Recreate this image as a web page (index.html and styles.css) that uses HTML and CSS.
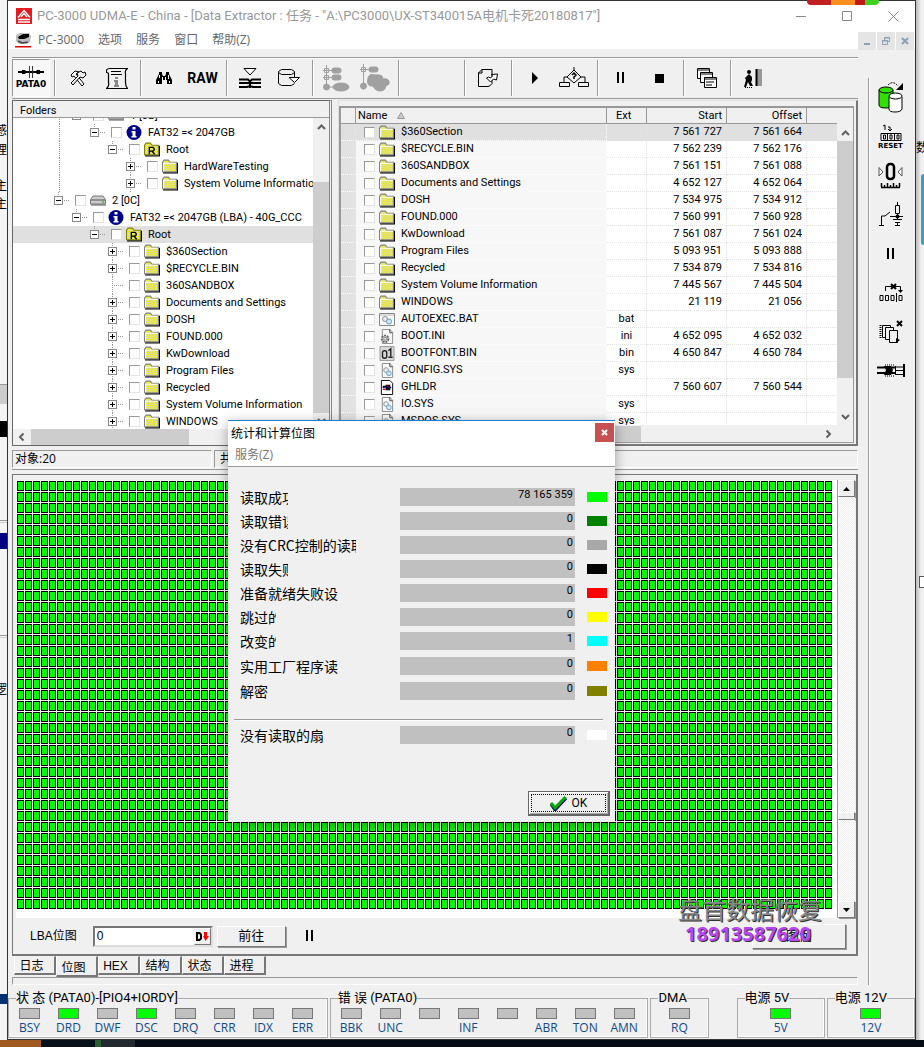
FILE: index.html
```html
<!DOCTYPE html>
<html lang="zh-CN">
<head>
<meta charset="utf-8">
<title>PC-3000 UDMA-E</title>
<link rel="stylesheet" href="styles.css">
</head>
<body>
<svg class="defs" aria-hidden="true">
  <defs>
    <pattern id="dither" width="2" height="2" patternUnits="userSpaceOnUse"><rect width="2" height="2" fill="#ff0"/><path d="M0 0h1v1H0zM1 1h1v1H1z" fill="#c8c8c8"/></pattern>
    <symbol id="folder" viewBox="0 0 15 13"><path d="M1 12.500h14M14.500 3v10" stroke="#000" stroke-width="1"/><path d="M.5 11.500V2.500L2 .5h4l1.500 2h6v9z" fill="url(#dither)" stroke="#808080"/><path d="M1.500 11V3.500h11.500" fill="none" stroke="#fff"/></symbol>
    <symbol id="rfolder" viewBox="0 0 15 13"><path d="M1 12.500h14M14.500 3v10" stroke="#000"/><path d="M.5 11.500V2.500L2 .5h4l1.500 2h6v9z" fill="url(#dither)" stroke="#808000"/><path d="M5 11V4.500h3.500L9.500 5.500v1.500l-1 1H5M7.500 8l2.500 3" fill="none" stroke="#000" stroke-width="1.300"/></symbol>
    <symbol id="info" viewBox="0 0 15 15"><circle cx="7.500" cy="7.500" r="7.500" fill="#00008b"/><path d="M6 2h3v2.500H6zM5 6h4v5h1v1.500H5V11h1V7.500H5z" fill="#fff"/></symbol>
    <symbol id="drive" viewBox="0 0 16 10"><path d="M3 .5h10L15.500 4v4.500H.5V4z" fill="#ccc" stroke="#777"/><path d="M1 9.500h15M1 4.500h14" stroke="#555"/><path d="M12 6h2v1h-2z" fill="#0a0"/></symbol>
    <symbol id="cog" viewBox="0 0 15 16"><path d="M2.500 .5h8l3 3v12h-11z" fill="#f8f8f8" stroke="#888"/><path d="M10.500 0v4h3" fill="none" stroke="#444"/><circle cx="6.500" cy="7.500" r="2.500" fill="#eee" stroke="#8494a0"/><circle cx="9.500" cy="11" r="2.500" fill="#cfe6f5" stroke="#6c9cc0"/></symbol>
    <symbol id="bat" viewBox="0 0 16 13"><path d="M.5 .5h15v12H.5z" fill="#f8f8f8" stroke="#888"/><path d="M1 2h14" stroke="#bbb"/><circle cx="6" cy="6" r="2.500" fill="#eee" stroke="#8494a0"/><circle cx="10" cy="8.500" r="2.500" fill="#cfe6f5" stroke="#6c9cc0"/></symbol>
    <symbol id="ini" viewBox="0 0 15 16"><path d="M2.500 .5h8l3 3v12h-11z" fill="#f8f8f8" stroke="#888"/><path d="M10.500 0v4h3" fill="none" stroke="#444"/><circle cx="5.500" cy="10.500" r="3.500" fill="#ddd" stroke="#666" stroke-width="2" stroke-dasharray="2 1"/><circle cx="5.500" cy="10.500" r="1.500" fill="#fff" stroke="#777"/></symbol>
    <symbol id="bin" viewBox="0 0 16 16"><path d="M.5 .5h15v15H.5z" fill="#d8d8d8" stroke="#999"/><rect x="3.200" y="5" width="4.500" height="8" rx="2" fill="none" stroke="#222" stroke-width="1.500"/><path d="M9.500 5L12 3v8M9.500 12h4.500" fill="none" stroke="#222" stroke-width="1.500"/></symbol>
    <symbol id="exe" viewBox="0 0 15 16"><path d="M1.500 .5h9l3 3v12h-12z" fill="#fff" stroke="#000"/><path d="M3 6h3v2H3zM6 5h5v6H6z" fill="#000"/><path d="M3 10h3M7 6.500h2" stroke="#e00" stroke-width="1.500"/><path d="M9 8h3M3 8h2" stroke="#00c" stroke-width="1.500"/></symbol>
    <symbol id="up" viewBox="0 0 9 6"><path d="M1 5l3.500-3.500L8 5" fill="none" stroke="#606060" stroke-width="2"/></symbol>
    <symbol id="pause" viewBox="0 0 8 12"><path d="M0 0h2v11H0zM5 0h2v11H5z"/></symbol>
  </defs>
</svg>
<div class="desktop">
  <aside class="edge edge-left" aria-hidden="true"><i class="frag t1">感</i><i class="frag t2">理</i><i class="frag t3">主</i><i class="frag t4">主</i><i class="blk k1"></i><i class="blk k2"></i><i class="blk k3"></i><i class="rule r1"></i><i class="rule r2"></i><i class="rule r3"></i><i class="frag t5">逻</i></aside>
  <main class="window">
    <header class="title">
      <svg width="16" height="16" viewBox="0 0 16 16"><path d="M0 0h16v16H0z" fill="#e21b22"/><path d="M2 9.500l6-7 6 7M5 9l3-3.500L11 9M2 11.500h12M2 14h12" fill="none" stroke="#fff" stroke-width="1.400"/></svg>
      <h1>PC-3000 UDMA-E - China - [Data Extractor : 任务 - "A:\PC3000\UX-ST340015A电机卡死20180817"]</h1>
      <div class="winbtns">
        <button aria-label="最小化"><svg width="11" height="11"><path d="M0 5.500h10" stroke="#888"/></svg></button>
        <button aria-label="最大化"><svg width="11" height="11"><path d="M.5 .5h9v9h-9z" fill="none" stroke="#888"/></svg></button>
        <button aria-label="关闭"><svg width="11" height="11"><path d="M.5 .5l10 10M10.500 .5l-10 10" stroke="#888"/></svg></button>
      </div>
    </header>
    <nav class="menu">
      <svg width="16" height="16" viewBox="0 0 16 16"><path d="M1 3l4-2h9l2 3-1 6-3 2H4l-3-3z" fill="#bbb"/><path d="M3 5l5-3h6v3l-5 2H4z"/><path d="M3 9l4 2 6-1" stroke="#444" fill="none" stroke-width="1.500"/><path d="M0 14h16v1.500H0z" fill="#d00"/></svg>
      <button>PC-3000</button><button>选项</button><button>服务</button><button>窗口</button><button>帮助(Z)</button>
      <div class="mdi">
        <button aria-label="最小化子窗口"><svg width="10" height="10"><path d="M2 7h6v2H2z" fill="#8aa0b4"/></svg></button>
        <button aria-label="还原子窗口"><svg width="10" height="10"><path d="M3.500 4V1.500h5v4H7M3 2h6" fill="none" stroke="#8aa0b4"/><path d="M1.500 4.500h5v4h-5zM1 5h6" fill="none" stroke="#8aa0b4"/></svg></button>
        <button aria-label="关闭子窗口"><svg width="10" height="10"><path d="M2 2l6 6M8 2L2 8" stroke="#8aa0b4" stroke-width="2"/></svg></button>
      </div>
    </nav>
    <div class="body">
      <div class="main">
        <div class="toolbar" role="toolbar">
          <button class="tb pata"><svg width="26" height="12" viewBox="0 0 26 12"><path d="M0 6h26" stroke="#000" stroke-width="2"/><path d="M4 4h3l2 2-2 2H4zM22 4h-3l-2 2 2 2h3z"/><path d="M11.500 0v12M14.500 0v12" stroke="#333"/></svg><span>PATA0</span></button><i class="sep"></i>
          <button class="tb" aria-label="工具"><svg width="18" height="18" viewBox="0 0 18 18"><path d="M2 6l4-4 4 1-3 2 8 10-2 2L5 7 3 8z" fill="#fff" stroke="#000"/><path d="M12 2l2 2 2-1 1 3-3 3-3-1-7 8-2-2 7-7-1-3z" fill="#f0f0f0" stroke="#000"/></svg></button>
          <button class="tb" aria-label="信息"><svg width="22" height="23" viewBox="0 0 22 23"><path d="M3.500 1.500h18q-3 2-2 5v9q0 4 2 6H.5q3-2 2-6v-8q0-2-2-2V3q1-1.500 3-1.500z" fill="none" stroke="#000" stroke-width="1.200"/><path d="M5 4.500h10M5 7.500h11" stroke="#000"/><path d="M9 10h3v2H9zM8 13h4v5h1v2H8v-2h1v-3H8z" fill="#888"/></svg></button><i class="sep"></i>
          <button class="tb" aria-label="查找"><svg width="16" height="14" viewBox="0 0 16 14"><path d="M3 1h3v2l1 2h2l1-2V1h3v2l3 6v4h-5V9H6v4H0V9l3-6z"/><path d="M3.500 4v3M6.500 6v3M9.500 6v3M12.500 4v4M2.500 10v2M13.500 10v2" stroke="#fff"/></svg></button>
          <button class="tb raw">RAW</button><i class="sep"></i>
          <button class="tb" aria-label="收集"><svg width="22" height="21" viewBox="0 0 22 21"><path d="M5 .5h12L11 7z" fill="#fff" stroke="#000"/><path d="M0 11.500h9l2 2 2-2h9M0 15h22M0 19h8l3-1 3 1h8M11 12v8" fill="none" stroke="#000" stroke-width="2"/></svg></button>
          <button class="tb" aria-label="磁盘"><svg width="24" height="20" viewBox="0 0 24 20"><path d="M1.500 4.500v11l3 2h10l3-2M17.500 4v5M1.500 3.500l3-2h10l3 2v1l-3 2h-10l-3-2z" fill="none" stroke="#000"/><path d="M12 9.500h10.500l-5 5z" fill="#fff" stroke="#000"/></svg></button><i class="sep"></i>
          <button class="tb" aria-label="树" disabled><svg width="28" height="27" viewBox="0 0 28 27" fill="#a0a0a0" stroke="#a0a0a0"><path d="M4.500 0v24M1 5.500h8M1 12.500h8M4 22h9" fill="none"/><path d="M2.500 3.500h4v4h-4zM2.500 10.500h4v4h-4z" fill="#eee"/><path d="M4.500 3v12M2 5.500h8M2 12.500h8" fill="none"/><rect x="10" y="3" width="9" height="5" rx="2"/><rect x="10" y="10" width="9" height="5" rx="2"/><circle cx="4.500" cy="22" r="3"/><ellipse cx="19" cy="22" rx="8" ry="4"/></svg></button>
          <button class="tb" aria-label="地图" disabled><svg width="31" height="29" viewBox="0 0 31 29" fill="#a0a0a0" stroke="#a0a0a0"><path d="M4.500 0v26M1 5.500h10" fill="none"/><path d="M2.500 3.500h4v4h-4z" fill="#eee"/><path d="M4.500 3v6M2 5.500h8" fill="none"/><rect x="10" y="3" width="9" height="5" rx="2"/><circle cx="4.500" cy="22" r="3"/><path d="M9 14q1-5 7-3 8-1 8 4 7-1 6 5-2 2-3 1 0 5-5 6-6 0-8-5-7 1-5-8z"/></svg></button><i class="sep"></i>
          <i class="space"></i><i class="sep"></i>
          <button class="tb" aria-label="导出"><svg width="20" height="20" viewBox="0 0 20 20"><path d="M4 1.500h10v14q-2 3-4 3H.5V5zM4 1v4H0" fill="none" stroke="#000"/><path d="M19.500 6l-1 6-3-1-3 3-4-4 2-1 2 1 2-2-1-1.500z" fill="#fff" stroke="#000"/></svg></button><i class="sep"></i>
          <button class="tb" aria-label="开始"><svg width="8" height="12"><path d="M1 0l6 6-6 6z"/></svg></button>
          <button class="tb" aria-label="流程"><svg width="30" height="22" viewBox="0 0 30 22"><path d="M15 0v4M15 3l7 7-7 6-7-6zM8 10H5v5M22 10h4v5M.5 15.500h10v4H.5zM19.500 15.500h10v4h-10z" fill="none" stroke="#000"/><path d="M13 8l2-2 2 2-2 2v2" fill="none" stroke="#000" stroke-width="1.500"/></svg></button><i class="sep"></i>
          <button class="tb" aria-label="暂停"><svg width="8" height="12"><use href="#pause"/></svg></button>
          <button class="tb" aria-label="停止"><svg width="9" height="9"><path d="M0 0h9v9H0z"/></svg></button><i class="sep"></i>
          <button class="tb" aria-label="窗口"><svg width="20" height="20" viewBox="0 0 20 20"><g fill="#fff" stroke="#000"><path d="M.5 .5h12v10H.5zM1 2h11"/><path d="M3.500 4.500h12v10h-12zM4 6h11"/><path d="M7.500 9.500h12v10h-12zM8 11h11M9 14h8M9 17h6"/></g></svg></button><i class="sep"></i>
          <button class="tb" aria-label="退出"><svg width="20" height="19" viewBox="0 0 20 19"><circle cx="5" cy="3" r="2"/><path d="M5 5l3 3v3l-1 2 2 4H6l-2-4-2 5H0l2-7-1-2z"/><path d="M12 0h6v17h-6z" fill="#999"/><path d="M12.500 0v17" stroke="#000" stroke-width="2"/><path d="M1 18.500h8" stroke="#000" stroke-dasharray="1 1"/></svg></button>
        </div>
        <div class="panels">
          <section class="folders">
            <h2>Folders</h2>
            <div class="tree" role="tree">
              <div class="row d1 line0"><i class="exp m"></i><input type="checkbox" aria-label="1"><svg class="ic"><use href="#drive"/></svg><span>1 [0B]</span></div>
              <div class="row d2 line0"><i class="exp m"></i><input type="checkbox" aria-label="2"><svg class="ic"><use href="#info"/></svg><span>FAT32 =&lt; 2047GB</span></div>
              <div class="row d3 line0"><i class="exp m"></i><input type="checkbox" aria-label="3"><svg class="ic"><use href="#rfolder"/></svg><span>Root</span></div>
              <div class="row d4 line0"><i class="exp"></i><input type="checkbox" aria-label="4"><svg class="ic"><use href="#folder"/></svg><span>HardWareTesting</span></div>
              <div class="row d4 line0"><i class="exp"></i><input type="checkbox" aria-label="5"><svg class="ic"><use href="#folder"/></svg><span>System Volume Information</span></div>
              <div class="row d0"><i class="exp m"></i><input type="checkbox" aria-label="6"><svg class="ic"><use href="#drive"/></svg><span>2 [0C]</span></div>
              <div class="row d1"><i class="exp m"></i><input type="checkbox" aria-label="7"><svg class="ic"><use href="#info"/></svg><span>FAT32 =&lt; 2047GB (LBA) - 40G_CCC</span></div>
              <div class="row d2 sel"><i class="exp m"></i><input type="checkbox" aria-label="8"><svg class="ic"><use href="#rfolder"/></svg><span>Root</span></div>
              <div class="row d3"><i class="exp"></i><input type="checkbox" aria-label="9"><svg class="ic"><use href="#folder"/></svg><span>$360Section</span></div>
              <div class="row d3"><i class="exp"></i><input type="checkbox" aria-label="10"><svg class="ic"><use href="#folder"/></svg><span>$RECYCLE.BIN</span></div>
              <div class="row d3"><i class="exp none"></i><input type="checkbox" aria-label="11"><svg class="ic"><use href="#folder"/></svg><span>360SANDBOX</span></div>
              <div class="row d3"><i class="exp"></i><input type="checkbox" aria-label="12"><svg class="ic"><use href="#folder"/></svg><span>Documents and Settings</span></div>
              <div class="row d3"><i class="exp"></i><input type="checkbox" aria-label="13"><svg class="ic"><use href="#folder"/></svg><span>DOSH</span></div>
              <div class="row d3"><i class="exp"></i><input type="checkbox" aria-label="14"><svg class="ic"><use href="#folder"/></svg><span>FOUND.000</span></div>
              <div class="row d3"><i class="exp"></i><input type="checkbox" aria-label="15"><svg class="ic"><use href="#folder"/></svg><span>KwDownload</span></div>
              <div class="row d3"><i class="exp"></i><input type="checkbox" aria-label="16"><svg class="ic"><use href="#folder"/></svg><span>Program Files</span></div>
              <div class="row d3"><i class="exp"></i><input type="checkbox" aria-label="17"><svg class="ic"><use href="#folder"/></svg><span>Recycled</span></div>
              <div class="row d3"><i class="exp"></i><input type="checkbox" aria-label="18"><svg class="ic"><use href="#folder"/></svg><span>System Volume Information</span></div>
              <div class="row d3"><i class="exp"></i><input type="checkbox" aria-label="19"><svg class="ic"><use href="#folder"/></svg><span>WINDOWS</span></div>
            </div>
            <div class="vbar"><svg><use href="#up"/></svg><i class="gap-tree"></i><i class="thumb"></i><svg class="dn"><use href="#up"/></svg></div>
            <div class="hbar"><svg class="lt"><use href="#up"/></svg><i class="thumb tree-h"></i><svg class="rt"><use href="#up"/></svg></div>
          </section>
          <section class="files">
            <div class="fileview">
            <div class="tablebox">
            <table>
              <colgroup><col class="c0"><col class="c1"><col class="c2"><col class="c3"><col class="c3"><col></colgroup>
              <thead><tr><th></th><th class="n">Name <svg class="sort" width="8" height="7"><path d="M4 .5l3.500 6h-7z" fill="#ccc" stroke="#999"/></svg></th><th>Ext</th><th class="r">Start</th><th class="r">Offset</th><th></th></tr></thead>
              <tbody>
              <tr class="sel"><td></td><td><label><input type="checkbox"><svg class="ic"><use href="#folder"/></svg>$360Section</label></td><td></td><td>7 561 727</td><td>7 561 664</td><td></td></tr>
              <tr><td></td><td><label><input type="checkbox"><svg class="ic"><use href="#folder"/></svg>$RECYCLE.BIN</label></td><td></td><td>7 562 239</td><td>7 562 176</td><td></td></tr>
              <tr><td></td><td><label><input type="checkbox"><svg class="ic"><use href="#folder"/></svg>360SANDBOX</label></td><td></td><td>7 561 151</td><td>7 561 088</td><td></td></tr>
              <tr><td></td><td><label><input type="checkbox"><svg class="ic"><use href="#folder"/></svg>Documents and Settings</label></td><td></td><td>4 652 127</td><td>4 652 064</td><td></td></tr>
              <tr><td></td><td><label><input type="checkbox"><svg class="ic"><use href="#folder"/></svg>DOSH</label></td><td></td><td>7 534 975</td><td>7 534 912</td><td></td></tr>
              <tr><td></td><td><label><input type="checkbox"><svg class="ic"><use href="#folder"/></svg>FOUND.000</label></td><td></td><td>7 560 991</td><td>7 560 928</td><td></td></tr>
              <tr><td></td><td><label><input type="checkbox"><svg class="ic"><use href="#folder"/></svg>KwDownload</label></td><td></td><td>7 561 087</td><td>7 561 024</td><td></td></tr>
              <tr><td></td><td><label><input type="checkbox"><svg class="ic"><use href="#folder"/></svg>Program Files</label></td><td></td><td>5 093 951</td><td>5 093 888</td><td></td></tr>
              <tr><td></td><td><label><input type="checkbox"><svg class="ic"><use href="#folder"/></svg>Recycled</label></td><td></td><td>7 534 879</td><td>7 534 816</td><td></td></tr>
              <tr><td></td><td><label><input type="checkbox"><svg class="ic"><use href="#folder"/></svg>System Volume Information</label></td><td></td><td>7 445 567</td><td>7 445 504</td><td></td></tr>
              <tr><td></td><td><label><input type="checkbox"><svg class="ic"><use href="#folder"/></svg>WINDOWS</label></td><td></td><td>21 119</td><td>21 056</td><td></td></tr>
              <tr><td></td><td><label><input type="checkbox"><svg class="ic"><use href="#bat"/></svg>AUTOEXEC.BAT</label></td><td>bat</td><td></td><td></td><td></td></tr>
              <tr><td></td><td><label><input type="checkbox"><svg class="ic"><use href="#ini"/></svg>BOOT.INI</label></td><td>ini</td><td>4 652 095</td><td>4 652 032</td><td></td></tr>
              <tr><td></td><td><label><input type="checkbox"><svg class="ic"><use href="#bin"/></svg>BOOTFONT.BIN</label></td><td>bin</td><td>4 650 847</td><td>4 650 784</td><td></td></tr>
              <tr><td></td><td><label><input type="checkbox"><svg class="ic"><use href="#cog"/></svg>CONFIG.SYS</label></td><td>sys</td><td></td><td></td><td></td></tr>
              <tr><td></td><td><label><input type="checkbox"><svg class="ic"><use href="#exe"/></svg>GHLDR</label></td><td></td><td>7 560 607</td><td>7 560 544</td><td></td></tr>
              <tr><td></td><td><label><input type="checkbox"><svg class="ic"><use href="#cog"/></svg>IO.SYS</label></td><td>sys</td><td></td><td></td><td></td></tr>
              <tr><td></td><td><label><input type="checkbox"><svg class="ic"><use href="#cog"/></svg>MSDOS.SYS</label></td><td>sys</td><td></td><td></td><td></td></tr>
              </tbody>
            </table>
            </div>
            <div class="vbar"><svg><use href="#up"/></svg><i class="thumb file-v"></i><i class="fill"></i><svg class="dn"><use href="#up"/></svg></div>
            <div class="hbar"><svg class="lt"><use href="#up"/></svg><i class="thumb file-h"></i><svg class="rt"><use href="#up"/></svg></div>
            </div>
          </section>
        </div>
        <div class="counts"><span>对象:20</span><span>共</span></div>
        <section class="map">
          <div class="mapview"><div class="cells"></div></div>
          <div class="oldbar"><button aria-label="向上"><svg width="7" height="4"><path d="M0 4h7L3.500 0z"/></svg></button><i class="track"></i><i class="knob"></i><i class="track low"></i><button aria-label="向下"><svg width="7" height="4"><path d="M0 0h7L3.500 4z"/></svg></button></div>
          <form class="lba">
            <label for="lba">LBA位图</label>
            <div class="field"><input id="lba" type="text" value="0"><button type="button" aria-label="D"><svg width="13" height="9" viewBox="0 0 13 9"><path d="M1 1h2.500L5 2.500v4L3.500 8H1z" fill="none" stroke="#000" stroke-width="2"/><path d="M8 0h3v4h2L9.500 9 7 4h1z" fill="red"/></svg></button></div>
            <button type="button" class="raised go">前往</button>
            <svg width="8" height="12"><use href="#pause"/></svg>
            <button type="button" class="raised legend">图例</button>
          </form>
          <div class="mark" aria-hidden="true"><b>盘首数据恢复</b><strong>18913587620</strong></div>
        </section>
        <div class="tabs" role="tablist"><button>日志</button><button class="on">位图</button><button>HEX</button><button>结构</button><button>状态</button><button>进程</button></div>
        <div class="sunk"></div>
      </div>
      <div class="side" role="toolbar">
        <button aria-label="数据库"><svg width="26" height="31" viewBox="0 0 26 31"><path d="M1 8v15q0 3 7 3t7-3V8" fill="#2fe000" stroke="#000"/><ellipse cx="8" cy="8" rx="7" ry="3" fill="#2fe000" stroke="#000"/><path d="M11 15v12q0 3 6 3t7-3V15" fill="#fff" stroke="#000"/><ellipse cx="17.500" cy="14" rx="6.500" ry="3" fill="#fff" stroke="#000"/><path d="M10 3q5-5 10 1" fill="none" stroke="#000" stroke-dasharray="2 1"/><path d="M25 1v7h-7z"/></svg></button>
        <button aria-label="RESET"><svg width="22" height="17" viewBox="0 0 22 17"><path d="M3 2l2-1v5M8 3h2v4M8 5l2 2 2-2" fill="none" stroke="#000"/><path d="M1 9.500h20v7H1zM7.500 9v8M14.500 9v8M3.500 11h2v4h-2zM10 11h2v4h-2zM17 11h2v4h-2z" fill="none" stroke="#000"/></svg><span>RESET</span></button>
        <button aria-label="归零"><svg width="25" height="27" viewBox="0 0 25 27"><rect x="9" y="2" width="7" height="15" rx="3" fill="none" stroke="#000" stroke-width="2.500"/><path d="M1 5.500l4 4.500-4 4zM24 5.500L20 10l4 4z" fill="#fff" stroke="#555"/><path d="M3 25.500h19M3.500 21v4M6.500 23v2M9.500 21v4M12.500 23v2M15.500 21v4M18.500 23v2M21.500 21v4" stroke="#000" stroke-width="1.500"/></svg></button>
        <button aria-label="电源"><svg width="24" height="25" viewBox="0 0 24 25"><path d="M0 23.500h5M2.500 23v-9H6l5-4M11 14.500h13M18.500 0v3M16.500 3.500h4v8h-4zM18.500 12v6M14 17.500h9M16 20.500h5M16 23.500h5M18.500 20v4" fill="none" stroke="#000"/><circle cx="18.500" cy="14.500" r="2"/></svg></button>
        <button aria-label="暂停"><svg width="8" height="12"><use href="#pause"/></svg></button>
        <button aria-label="跳过"><svg width="24" height="19" viewBox="0 0 24 19"><path d="M6.500 8V3.500h15V8M1 12.500h3v5H1zM6.500 12.500h3v5h-3zM12 12.500h3v5h-3zM17.500 10v9M20 12.500h3v5h-3z" fill="none" stroke="#000"/><path d="M12 1l5 5M17 1l-5 5" stroke="#000" stroke-width="2"/><path d="M19 7h5l-2.500 3z"/></svg></button>
        <button aria-label="复制"><svg width="24" height="24" viewBox="0 0 24 24"><g fill="#f0f0f0" stroke="#000"><path d="M3.500 5.500h8v12h-8z"/><path d="M6.500 7.500h8v12h-8z"/><path d="M10.500 10.500h8v12h-8z"/></g><path d="M1.500 5v13" stroke="#000" stroke-width="2" stroke-dasharray="1 1"/><path d="M18 1l5 5M23 1l-5 5" stroke="#000" stroke-width="2"/><path d="M17 18l4 2-4 3z"/></svg></button>
        <button aria-label="连接"><svg width="28" height="13" viewBox="0 0 28 13"><path d="M0 3.500h19M0 9h19" stroke="#000" stroke-width="2"/><path d="M7 2h7l2 4-2 5H7l2-5z"/><path d="M8 1h9M8 12h9" stroke="#000" stroke-dasharray="1 1"/><path d="M18.500 3h8M18.500 10.500h8M18.500 2v9M18 6.500h8" fill="none" stroke="#000"/><path d="M27 0v13" stroke="#000" stroke-width="2"/></svg></button>
      </div>
    </div>
    <footer class="groups">
      <fieldset><legend>状 态 (PATA0)-[PIO4+IORDY]</legend><div class="leds"><span><i></i>BSY</span><span><i class="g"></i>DRD</span><span><i></i>DWF</span><span><i class="g"></i>DSC</span><span><i></i>DRQ</span><span><i></i>CRR</span><span><i></i>IDX</span><span><i></i>ERR</span></div></fieldset>
      <fieldset><legend>错 误 (PATA0)</legend><div class="leds"><span><i></i>BBK</span><span><i></i>UNC</span><span><i></i></span><span><i></i>INF</span><span><i></i></span><span><i></i>ABR</span><span><i></i>TON</span><span><i></i>AMN</span></div></fieldset>
      <fieldset><legend>DMA</legend><div class="leds one"><span><i></i>RQ</span></div></fieldset>
      <div></div>
      <fieldset><legend>电源 5V</legend><div class="leds one"><span><i class="g"></i>5V</span></div></fieldset>
      <fieldset><legend>电源 12V</legend><div class="leds one"><span><i class="g"></i>12V</span></div></fieldset>
    </footer>
    <div class="badge" aria-hidden="true"></div>
    <section class="dialog" role="dialog" aria-labelledby="dt">
      <header><h2 id="dt">统计和计算位图</h2><button aria-label="关闭"><svg width="7" height="7"><path d="M1 1l5 5M6 1L1 6" stroke="#fff" stroke-width="2"/></svg></button></header>
      <nav><button>服务(Z)</button></nav>
      <div class="stats">
        <div class="stat"><span class="w4">读取成功</span><output>78 165 359</output><i class="s1"></i></div>
        <div class="stat"><span class="w4">读取错误</span><output>0</output><i class="s2"></i></div>
        <div class="stat"><span class="w8">没有CRC控制的读取</span><output>0</output><i class="s3"></i></div>
        <div class="stat"><span class="w4">读取失败</span><output>0</output><i class="s4"></i></div>
        <div class="stat"><span>准备就绪失败设</span><output>0</output><i class="s5"></i></div>
        <div class="stat"><span class="w3">跳过的</span><output>0</output><i class="s6"></i></div>
        <div class="stat"><span class="w3">改变的</span><output>1</output><i class="s7"></i></div>
        <div class="stat"><span>实用工厂程序读</span><output>0</output><i class="s8"></i></div>
        <div class="stat"><span>解密</span><output>0</output><i class="s9"></i></div>
      </div>
      <hr>
      <div class="stats last"><div class="stat"><span>没有读取的扇</span><output>0</output><i class="s10"></i></div></div>
      <button class="ok"><span><svg width="17" height="15" viewBox="0 0 17 15"><path d="M1 8l4 6L16 2" fill="none" stroke="#00006a" stroke-width="3"/><path d="M1 7l4 5L15.500 1" fill="none" stroke="#0a0" stroke-width="3"/></svg>OK</span></button>
    </section>
  </main>
  <aside class="edge edge-right" aria-hidden="true"><i class="frag q1">数</i><i class="blk q2"></i><i class="blk q3"></i></aside>
  <div class="taskbar"></div>
</div>
</body>
</html>
```
FILE: styles.css
```css
* { box-sizing: border-box; }
body { margin: 0; font: 11px/17px Roboto, "Liberation Sans", "Noto Sans CJK SC", sans-serif; color: #000; background: #f4f4f4; }
button { font: inherit; color: inherit; background: none; border: 0; padding: 0; margin: 0; }
h1, h2 { margin: 0; font-weight: normal; }
i { font-style: normal; }
svg { display: block; flex: none; }
.defs { position: absolute; width: 0; height: 0; }
.desktop { display: grid; grid-template-columns: 7px 1fr 8px; grid-template-rows: auto 7px; }
.edge { position: relative; overflow: hidden; background: #f4f4f4; }
.edge-right { background: linear-gradient(90deg, #bbb, #f0f0f0 5px); }
.taskbar { grid-column: 1 / 4; background: linear-gradient(90deg, #a05a20 0 41px, #08101a 41px 95px, #2a6030 95px 101px, #222a30 101px 135px, #050c16 135px); }
.frag { position: absolute; right: 0; font-size: 12px; }
.t1 { top: 123px; } .t2 { top: 142px; } .t3 { top: 178px; } .t4 { top: 196px; } .t5 { top: 682px; }
.blk { position: absolute; left: 0; width: 7px; height: 16px; background: #000; }
.k1 { top: 421px; } .k2 { top: 533px; background: #000080; } .k3 { top: 994px; height: 10px; background: #003070; }
.rule { position: absolute; left: 0; right: 0; height: 3px; border-top: 1px solid #999; border-bottom: 1px solid #ccc; }
.r1 { top: 384px; height: 20px; background: #ccc; } .r2 { top: 520px; } .r3 { top: 635px; }
.frag.q1 { left: 0; top: 140px; } .q2 { left: 5px; top: 174px; height: 71px; background: #38a0c0; border-radius: 3px; }
.q3 { left: 3px; top: 576px; height: 12px; background: #fff; border: 1px solid #555; }

.window { position: relative; border: 1px solid #333; background: #f0f0f0; }
.title { display: flex; align-items: center; height: 30px; padding-left: 8px; background: #fff; color: #999; }
.title h1 { flex: 1; padding-left: 5px; font: 13px/18px Roboto, "Noto Sans CJK SC", sans-serif; white-space: nowrap; }
.winbtns { display: flex; gap: 35px; padding-right: 16px; }
.menu { display: flex; gap: 14px; align-items: center; height: 18px; padding-left: 7px; background: #fff; color: #666; font: 12px/18px "Open Sans", "Noto Sans CJK SC", sans-serif; }
.menu > svg { margin-right: -7px; }
.mdi { display: flex; gap: 1px; margin-left: auto; align-self: flex-start; padding: 1px 1px 0 0; }
.mdi button { display: grid; place-items: center; width: 18px; height: 18px; background: #e5e5e5; }

.body { display: grid; grid-template-columns: 1fr 47px; gap: 10px; padding-left: 4px; }
.main { min-width: 0; padding-top: 8px; }
.toolbar { display: flex; align-items: center; height: 42px; border-top: 1px solid #999; border-bottom: 1px solid #999; box-shadow: inset 0 1px #fff; }
.tb { display: grid; place-items: center; flex: 0 0 39px; height: 38px; }
.pata { flex-basis: 38px; align-content: center; gap: 1px; background: #f7f7f7; border: 1px solid #999; border-color: #999 #fff #fff #999; font: bold 9px/11px "DejaVu Sans", sans-serif; }
.raw { font: bold 14px/18px Roboto, sans-serif; }
.sep { flex: 0 0 8px; height: 36px; background: linear-gradient(90deg, transparent 4px, #999 4px 5px, #fff 5px 6px, transparent 6px); }
.space { flex: 0 0 58px; }

.panels { display: grid; grid-template-columns: 320px 1fr; gap: 6px; height: 346px; margin-top: 1px; }
.folders { display: grid; grid-template: 17px 1fr 16px / 1fr 16px; border: 1px solid #666; border-right: 3px double #888; background: #f0f0f0; min-height: 0; }
.folders h2 { grid-column: 1 / 3; padding-left: 7px; font-size: 11px; line-height: 19px; border-bottom: 1px solid #999; }
.tree { overflow: hidden; background: #fff; min-height: 0; min-width: 0; }
.row { display: flex; align-items: center; height: 17px; white-space: nowrap; }
.row:first-child { margin-top: -11px; }
.row.sel { background: #e0e0e0; }
.line0 { background: repeating-linear-gradient(#999 0 1px, transparent 1px 2px) 46px 0 / 1px 100% no-repeat; }
.d0 { padding-left: 41px; } .d1 { padding-left: 59px; } .d2 { padding-left: 77px; } .d3 { padding-left: 95px; } .d4 { padding-left: 113px; }
.exp { flex: none; width: 21px; height: 17px; background: linear-gradient(#000, #000) 2px 8px / 5px 1px no-repeat, linear-gradient(#000, #000) 4px 6px / 1px 5px no-repeat, linear-gradient(#fff, #fff) 1px 5px / 7px 7px no-repeat, linear-gradient(#888, #888) 0 4px / 9px 9px no-repeat, repeating-linear-gradient(90deg, #999 0 1px, transparent 1px 2px) 10px 8px / 6px 1px no-repeat, repeating-linear-gradient(#999 0 1px, transparent 1px 2px) 4px 0 / 1px 17px no-repeat; }
.exp.m { background: linear-gradient(#000, #000) 2px 8px / 5px 1px no-repeat, linear-gradient(#fff, #fff) 1px 5px / 7px 7px no-repeat, linear-gradient(#888, #888) 0 4px / 9px 9px no-repeat, repeating-linear-gradient(90deg, #999 0 1px, transparent 1px 2px) 10px 8px / 6px 1px no-repeat, repeating-linear-gradient(#999 0 1px, transparent 1px 2px) 4px 0 / 1px 5px no-repeat; }
.exp.none { background: repeating-linear-gradient(90deg, #999 0 1px, transparent 1px 2px) 4px 8px / 12px 1px no-repeat, repeating-linear-gradient(#999 0 1px, transparent 1px 2px) 4px 0 / 1px 17px no-repeat; }
input[type=checkbox] { appearance: none; flex: none; margin: 0; width: 11px; height: 11px; background: #fff; border: 1px solid #999; border-color: #999 #e4e4e4 #e4e4e4 #999; }
.ic { width: 16px; height: 15px; margin: 0 6px 0 4px; }
.vbar { display: flex; flex-direction: column; align-items: center; background: #f0f0f0; min-height: 0; }
.vbar svg, .hbar svg { width: 9px; height: 6px; margin: 6px 0 5px; }
.vbar .dn { transform: rotate(180deg); margin: 5px 0; }
.thumb { flex: 1; width: 16px; background: #cdcdcd; }
.gap-tree { height: 47px; }
.hbar { grid-column: 1 / 3; display: flex; align-items: center; background: #f0f0f0; }
.hbar svg { margin: 0 5px 0 4px; }
.hbar .lt { transform: rotate(-90deg); }
.hbar .rt { transform: rotate(90deg); margin-left: auto; }
.hbar .thumb { height: 16px; }
.hbar .tree-h { flex: 0 0 158px; } .hbar .file-h { flex: 0 0 282px; }
.hbar .file-h ~ .rt { margin-right: 20px; }
.files { border: 1px solid #ddd; border-right: 2px solid #777; border-bottom: 2px solid #777; padding: 5px 2px 1px 0; min-width: 0; min-height: 0; }
.fileview { display: grid; grid-template: minmax(0, 1fr) 17px / minmax(0, 1fr) 16px; height: 100%; border: 1px solid #999; border-width: 2px 1px 1px 2px; }
.tablebox { overflow: hidden; min-height: 0; background: #fff; }
table { table-layout: fixed; width: 100%; border-collapse: separate; border-spacing: 0; }
.c0 { width: 15px; } .c1 { width: 251px; } .c2 { width: 40px; } .c3 { width: 80px; }
th { height: 16px; padding: 0 4px 0 2px; background: #f0f0f0; border-right: 1px solid #999; border-bottom: 1px solid #999; font-weight: normal; line-height: 15px; text-align: left; }
th:nth-child(3) { padding-left: 9px; }
th.r { text-align: right; }
th:last-child { border-right: 0; }
.sort { display: inline-block; margin-left: 7px; }
td { height: 17px; padding: 0 4px 0 0; text-align: right; line-height: 16px; border-right: 1px dotted #e4e4e4; border-bottom: 1px dotted #e4e4e4; }
td:first-child { background: #e2e2e2; border-bottom-color: #fff; }
td:nth-child(2) { background: #f7f7f7; text-align: left; border-color: #fff; }
td:nth-child(3) { text-align: center; padding-left: 4px; }
td:last-child { border-right: 0; }
tr.sel td { background: #e0e0e0; }
td label { display: flex; align-items: center; height: 16px; padding-left: 8px; white-space: nowrap; }
.fileview .vbar { margin-top: 16px; }
.vbar .file-v { flex: 0 0 237px; }
.fill { flex: 1; }

.counts { display: grid; grid-template-columns: 200px 1fr; gap: 2px; height: 18px; margin: 4px 0 3px; font: 12px/16px "Open Sans", "Noto Sans CJK SC", sans-serif; }
.counts span { padding-left: 2px; border: 1px solid; border-color: #999 #fff #fff #999; }
.counts span + span { padding-left: 5px; }
.map { position: relative; display: grid; grid-template-columns: 1fr 18px; margin-top: 6px; padding: 5px 1px 0 3px; border: solid #777; border-width: 1px 2px 2px 1px; box-shadow: 0 -4px #f0f0f0, 0 -5px #999; }
.mapview { height: 438px; padding: 1px 4px 8px 1px; background: #fff; }
.cells { height: 429px; background:
  linear-gradient(90deg, transparent 7px, #fff 7px) 0 0 / 8px 11px,
  linear-gradient(transparent 10px, #fff 10px) 0 0 / 8px 11px,
  linear-gradient(90deg, #000 1px, transparent 1px 6px, #000 6px) 0 0 / 8px 11px,
  linear-gradient(#000 1px, #0f0 1px 9px, #000 9px) 0 0 / 8px 11px; }
.oldbar { display: flex; flex-direction: column; border-left: 1px solid #999; }
.oldbar button, .knob, .raised { background: #f0f0f0; border: 1px solid; border-color: #fff #777 #777 #fff; box-shadow: 1px 1px #999; }
.oldbar button { display: grid; place-items: center; height: 17px; }
.track { flex: 313; background: repeating-conic-gradient(#fff 0 25%, #eee 0 50%) 0 0 / 2px 2px; }
.track.low { flex: 81; }
.knob { height: 8px; }
.lba { grid-column: 1 / 3; display: flex; align-items: center; height: 36px; padding: 0 9px 0 14px; font: 12px/16px "Liberation Sans", "Noto Sans CJK SC", sans-serif; }
.field { display: flex; width: 120px; height: 21px; margin: 0 4px 0 16px; border: 2px solid; border-color: #777 #ddd #ddd #777; background: #fff; }
.field input { flex: 1; min-width: 0; border: 0; padding: 0 2px; font: inherit; background: none; }
.field button { display: grid; place-items: center; width: 17px; background: #f0f0f0; border: 1px solid; border-color: #fff #777 #777 #fff; }
.raised { height: 21px; }
.go { width: 69px; margin-right: 20px; font-size: 13px; }
.legend { width: 94px; height: 25px; margin-left: auto; font-size: 13px; }
.mark { position: absolute; right: 34px; bottom: 8px; display: grid; justify-items: center; color: #888; text-shadow: 1px 1px #333; font: 24px/26px "Noto Sans CJK SC", sans-serif; }
.mark b { font-weight: normal; }
.mark strong { margin-right: 4px; font: bold 20px/24px "Open Sans", sans-serif; color: #b846f5; }
.tabs { display: flex; padding-left: 2px; font: 12px/18px "Liberation Sans", "Noto Sans CJK SC", sans-serif; }
.tabs button { width: 42px; height: 19px; padding-right: 6px; border: 1px solid; border-color: transparent #777 #777 #fff; border-bottom-width: 2px; border-right-width: 2px; }
.tabs .on { height: 21px; padding-top: 2px; background: #f0f0f0; }
.sunk { height: 8px; border: 1px solid; border-color: #999 #fff #fff #999; }
.side { display: flex; flex-direction: column; align-items: center; margin-top: 29px; padding-right: 3px; border-left: 1px solid #999; box-shadow: inset 1px 0 #fff; }
.side button { display: grid; justify-items: center; align-content: center; height: 39px; font: bold 7px/8px "DejaVu Sans", sans-serif; gap: 1px; }

.groups { display: grid; grid-template-columns: 319fr 318fr 58fr 24fr 88fr 88fr; gap: 2px; padding: 7px 0 1px; }
fieldset { min-width: 0; margin: 0; padding: 4px 1px 1px; border: 1px solid #aaa; box-shadow: inset -1px -1px #fff; font: 12px/16px "Open Sans", "Noto Sans CJK SC", sans-serif; }
legend { margin-left: 6px; padding: 0; font: 13px/12px Roboto, "Noto Sans CJK SC", sans-serif; white-space: nowrap; }
.leds { display: flex; }
.leds span { width: 39px; display: flex; flex-direction: column; align-items: center; color: #134a8a; line-height: 17px; }
.leds i { width: 21px; height: 11px; border: 1px solid #777; background: #c0c0c0; }
.leds i.g { background: #0f0; }
.leds.one { justify-content: center; }
.badge { position: absolute; left: 799px; top: -1px; width: 72px; height: 5px; border-radius: 0 0 4px 4px; background: linear-gradient(90deg, #c02020 24px, #ff9020 24px 48px, #c01818 48px 58px, #40d020 58px); }

.dialog { position: absolute; left: 220px; top: 419px; width: 387px; padding-bottom: 6px; border-top: 1px solid #1a7ed0; background: #f0f0f0; box-shadow: 0 3px 12px rgba(0, 0, 0, .35); display: flex; flex-direction: column; }
.dialog header { display: flex; justify-content: space-between; padding: 2px 1px 0 3px; background: #fff; font: 12px/19px "Noto Sans CJK SC", sans-serif; }
.dialog h2 { font-size: 12px; }
.dialog header button { display: grid; place-items: center; width: 19px; height: 19px; background: #c75050; }
.dialog nav { height: 25px; padding: 4px 7px; background: #fff; border-bottom: 1px solid #999; color: #777; font: 12px/18px "Open Sans", "Noto Sans CJK SC", sans-serif; }
.stats { display: grid; gap: 6px; padding: 21px 8px 0 12px; }
.stat { display: flex; align-items: center; height: 18px; }
.stat:nth-child(n+8) { margin-top: 1px; }
.stat span { overflow: hidden; white-space: nowrap; height: 18px; font: 14px/18px "Noto Sans CJK SC", sans-serif; }
.w4 { width: 48px; } .w3 { width: 36px; } .w8 { width: 116px; }
.stat output { width: 175px; height: 18px; padding-right: 2px; margin: 0 12px 0 auto; background: #c0c0c0; text-align: right; line-height: 14px; }
.stat i { width: 20px; height: 10px; }
.s1 { background: #0f0; } .s2 { background: #008000; } .s3 { background: #a8a8a8; } .s4 { background: #000; } .s5 { background: #f00; } .s6 { background: #ff0; } .s7 { background: #0ff; } .s8 { background: #ff8000; } .s9 { background: #808000; } .s10 { background: #fff; }
.dialog hr { width: 369px; margin: 19px 6px 0; border: 0; border-top: 1px solid #999; border-bottom: 1px solid #fff; }
.stats.last { padding-top: 5px; }
.ok { align-self: flex-end; width: 82px; height: 25px; margin: 47px 5px 0; padding: 2px; border: 1px solid #666; border-width: 1px 2px 2px 1px; box-shadow: inset 1px 1px #fff, inset -1px -1px #aaa; }
.ok span { display: flex; align-items: center; justify-content: center; gap: 5px; height: 18px; border: 1px dotted #000; font-size: 12px; }
```
